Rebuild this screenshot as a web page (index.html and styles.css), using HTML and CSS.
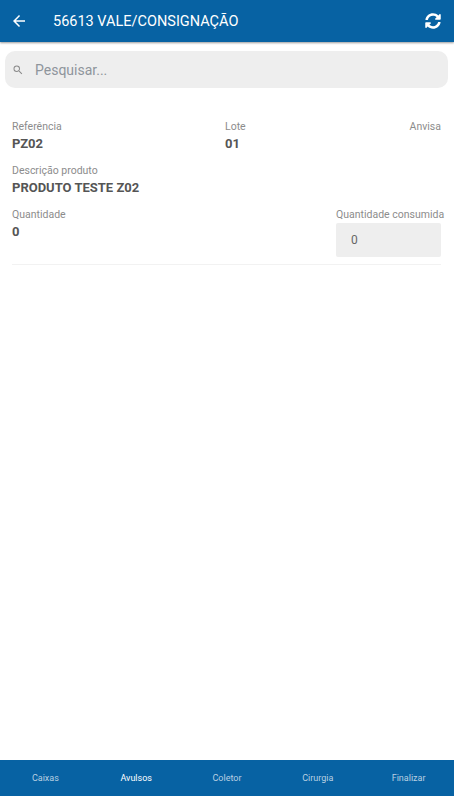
FILE: index.html
```html
<!DOCTYPE html>
<html lang="pt-BR">
<head>
  <meta charset="UTF-8">
  <meta name="viewport" content="width=device-width, initial-scale=1.0">
  <title>Vale/Consignação</title>
  <link rel="stylesheet" href="styles.css">
</head>
<body>
  <div class="app">
    <header class="topbar">
      <svg class="back-icon" viewBox="0 0 24 24" width="18" height="18">
        <path d="M20 11H7.83l5.59-5.59L12 4l-8 8 8 8 1.41-1.41L7.83 13H20v-2z" fill="#fff"/>
      </svg>
      <h1>56613 VALE/CONSIGNAÇÃO</h1>
      <svg class="sync-icon" viewBox="0 0 512 512" width="16" height="16">
        <path d="M370.72 133.28C339.46 104.02 298.98 87.97 256 88c-77.35.07-144.13 53.11-162.56 126.67-1.34 5.36-6.11 9.33-11.63 9.33H24.1c-7.51 0-13.21-6.82-11.82-14.2C33.93 94.92 134.81 8 256 8c66.45 0 126.79 26.14 171.32 68.68L463 41c15.12-15.12 41-4.41 41 16.97V192c0 13.25-10.75 24-24 24H345.97c-21.38 0-32.09-25.85-16.97-40.97l41.72-41.75zM32 296h134.03c21.38 0 32.09 25.85 16.97 40.97l-41.72 41.75c31.26 29.27 71.74 45.32 114.72 45.28 77.31-.07 144.11-53.08 162.56-126.67 1.34-5.36 6.11-9.33 11.63-9.33h57.71c7.51 0 13.21 6.82 11.82 14.2C478.07 417.08 377.19 504 256 504c-66.45 0-126.79-26.14-171.32-68.68L49 471c-15.12 15.12-41 4.41-41-16.97V320c0-13.25 10.75-24 24-24z" fill="#fff"/>
      </svg>
    </header>

    <div class="search">
      <svg class="search-icon" viewBox="0 0 24 24" width="12" height="12">
        <path d="M15.5 14h-.79l-.28-.27A6.47 6.47 0 0 0 16 9.5 6.5 6.5 0 1 0 9.5 16c1.61 0 3.09-.59 4.23-1.57l.27.28v.79l5 4.99L20.49 19l-4.99-5zm-6 0C7.01 14 5 11.99 5 9.5S7.01 5 9.5 5 14 7.01 14 9.5 11.99 14 9.5 14z" fill="#8a8a8a"/>
      </svg>
      <span class="search-text">Pesquisar...</span>
    </div>

    <main class="item">
      <div class="row">
        <div class="field col-ref">
          <span class="label">Referência</span>
          <span class="value">PZ02</span>
        </div>
        <div class="field col-lote">
          <span class="label">Lote</span>
          <span class="value">01</span>
        </div>
        <div class="field col-right">
          <span class="label">Anvisa</span>
        </div>
      </div>
      <div class="row">
        <div class="field">
          <span class="label">Descrição produto</span>
          <span class="value">PRODUTO TESTE Z02</span>
        </div>
      </div>
      <div class="row row-last">
        <div class="field">
          <span class="label">Quantidade</span>
          <span class="value">0</span>
        </div>
        <div class="field field-qty">
          <span class="label">Quantidade consumida</span>
          <div class="qty-box">0</div>
        </div>
      </div>
    </main>

    <nav class="tabs">
      <span class="tab">Caixas</span>
      <span class="tab active">Avulsos</span>
      <span class="tab">Coletor</span>
      <span class="tab">Cirurgia</span>
      <span class="tab">Finalizar</span>
    </nav>
  </div>
</body>
</html>
```
FILE: styles.css
```css
* {
  margin: 0;
  padding: 0;
  box-sizing: border-box;
  font-family: Roboto, sans-serif;
}
body {
  background: #fff;
}
.app {
  display: flex;
  flex-direction: column;
  height: 796px;
}
.topbar {
  display: flex;
  align-items: center;
  height: 42px;
  padding: 0 13px 0 10px;
  background: #0762a3;
  box-shadow: 0 1px 2px rgba(0, 0, 0, 0.4);
}
.topbar h1 {
  flex: 1;
  margin-left: 25px;
  font-size: 14.5px;
  font-weight: 400;
  color: #fff;
}
.search {
  display: flex;
  align-items: center;
  height: 37px;
  margin: 9px 6px 0 5px;
  padding-left: 7px;
  background: #eeeeee;
  border-radius: 10px;
}
.search-text {
  margin-left: 11px;
  font-size: 14px;
  color: #8e959c;
}
.item {
  flex: 1;
  padding: 33px 13px 0 12px;
}
.row {
  display: flex;
  justify-content: space-between;
  margin-bottom: 14px;
}
.row-last {
  margin-bottom: 0;
  padding-bottom: 7px;
  border-bottom: 1px solid #f2f2f2;
}
.field {
  display: flex;
  flex-direction: column;
}
.col-ref {
  width: 213px;
}
.col-lote {
  flex: 1;
}
.col-right {
  text-align: right;
}
.label {
  font-size: 10.5px;
  line-height: 12px;
  color: #8c8c8c;
}
.value {
  margin-top: 3px;
  font-size: 13px;
  line-height: 15px;
  font-weight: 700;
  color: #555;
}
.field-qty {
  width: 105px;
}
.field-qty .label {
  white-space: nowrap;
  text-align: right;
}
.qty-box {
  height: 34px;
  margin-top: 2px;
  padding-left: 15px;
  background: #eeeeee;
  border-radius: 2px;
  font-size: 12px;
  line-height: 34px;
  color: #666;
}
.tabs {
  display: flex;
  align-items: center;
  height: 36px;
  background: #0762a3;
}
.tab {
  flex: 1;
  text-align: center;
  font-size: 9px;
  color: #b9d0e2;
}
.tab.active {
  color: #fff;
}
```
